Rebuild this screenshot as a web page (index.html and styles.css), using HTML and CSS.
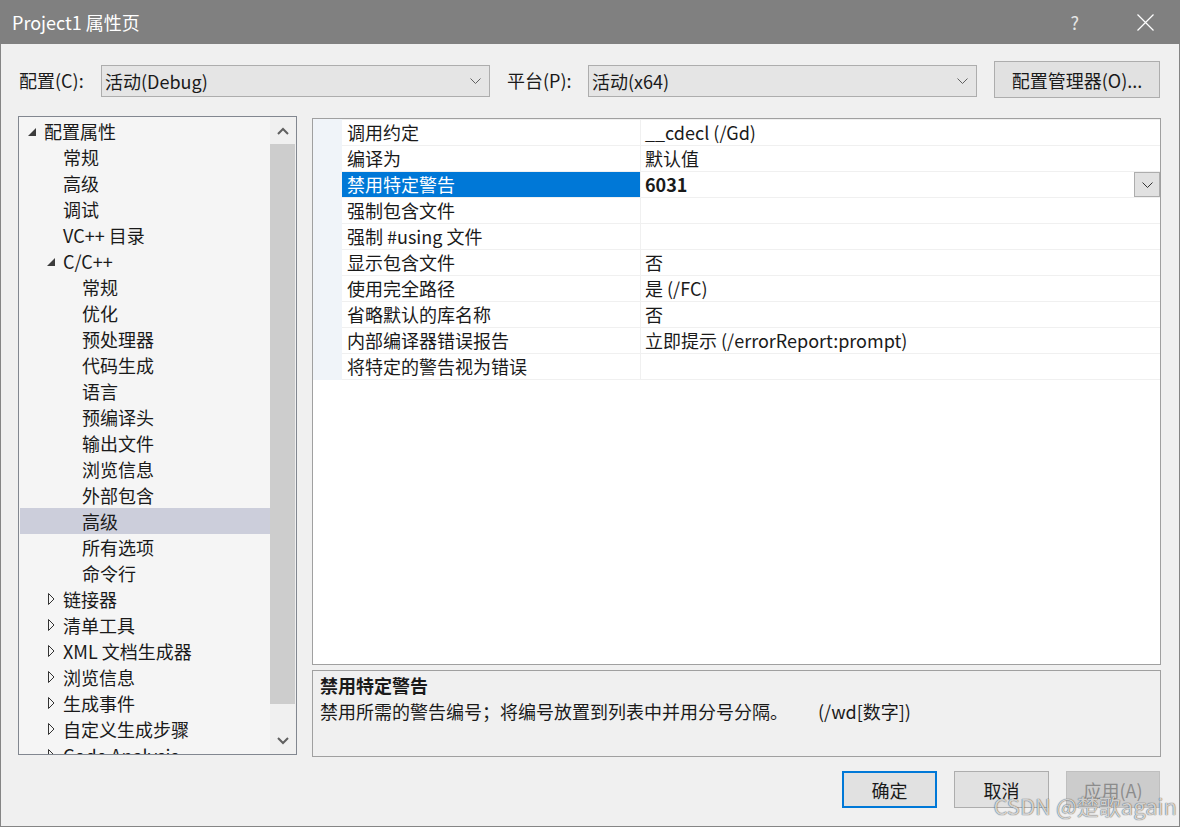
FILE: index.html
```html
<!DOCTYPE html>
<html lang="zh-CN">
<head>
  <meta charset="UTF-8" />
  <title>Project1 属性页</title>
  <link rel="stylesheet" href="styles.css">
</head>
<body>
<div class="window">

  <!-- Title bar -->
  <div class="titlebar">
    <span class="title">Project1 属性页</span>
    <span class="help">?</span>
    <svg class="close" width="17" height="17" viewBox="0 0 17 17">
      <path d="M0.5 0.5 L16.5 16.5 M16.5 0.5 L0.5 16.5" stroke="#ffffff" stroke-width="1.2" fill="none"/>
    </svg>
  </div>

  <div class="dialog">

    <!-- Configuration / platform -->
    <div class="config-row">
      <span class="field-label">配置(C):</span>
      <div class="combo">
        <span>活动(Debug)</span>
        <svg class="chev" width="11" height="6" viewBox="0 0 11 6"><path d="M0.5 0.5 L5.5 5.5 L10.5 0.5" stroke="#606060" fill="none"/></svg>
      </div>
      <span class="field-label platform">平台(P):</span>
      <div class="combo">
        <span>活动(x64)</span>
        <svg class="chev" width="11" height="6" viewBox="0 0 11 6"><path d="M0.5 0.5 L5.5 5.5 L10.5 0.5" stroke="#606060" fill="none"/></svg>
      </div>
      <button class="btn mgr-btn">配置管理器(O)...</button>
    </div>

    <div class="main">

      <!-- Tree -->
      <div class="tree">
        <ul class="tree-list" id="treeList"></ul>
        <div class="scrollbar">
          <div class="scroll-arrow">
            <svg width="12" height="8" viewBox="0 0 12 8"><path d="M1 7 L6 2 L11 7" stroke="#606060" stroke-width="2" fill="none"/></svg>
          </div>
          <div class="scroll-thumb"></div>
          <div class="scroll-gap"></div>
          <div class="scroll-arrow">
            <svg width="12" height="8" viewBox="0 0 12 8"><path d="M1 1 L6 6 L11 1" stroke="#606060" stroke-width="2" fill="none"/></svg>
          </div>
        </div>
      </div>

      <div class="right">
        <!-- Property grid -->
        <div class="grid">
          <div class="prop-row"><div class="gutter"></div><div class="name">调用约定</div><div class="value">__cdecl (/Gd)</div></div>
          <div class="prop-row"><div class="gutter"></div><div class="name">编译为</div><div class="value">默认值</div></div>
          <div class="prop-row selected">
            <div class="gutter"></div>
            <div class="name">禁用特定警告</div>
            <div class="value bold">6031
              <div class="drop-btn">
                <svg width="11" height="6" viewBox="0 0 11 6"><path d="M0.5 0.5 L5.5 5.5 L10.5 0.5" stroke="#333333" fill="none"/></svg>
              </div>
            </div>
          </div>
          <div class="prop-row"><div class="gutter"></div><div class="name">强制包含文件</div><div class="value"></div></div>
          <div class="prop-row"><div class="gutter"></div><div class="name">强制 #using 文件</div><div class="value"></div></div>
          <div class="prop-row"><div class="gutter"></div><div class="name">显示包含文件</div><div class="value">否</div></div>
          <div class="prop-row"><div class="gutter"></div><div class="name">使用完全路径</div><div class="value">是 (/FC)</div></div>
          <div class="prop-row"><div class="gutter"></div><div class="name">省略默认的库名称</div><div class="value">否</div></div>
          <div class="prop-row"><div class="gutter"></div><div class="name">内部编译器错误报告</div><div class="value">立即提示 (/errorReport:prompt)</div></div>
          <div class="prop-row last"><div class="gutter"></div><div class="name">将特定的警告视为错误</div><div class="value"></div></div>
        </div>

        <!-- Description -->
        <div class="desc">
          <div class="desc-title">禁用特定警告</div>
          <div class="desc-text">禁用所需的警告编号；将编号放置到列表中并用分号分隔。<span class="switch">(/wd[数字])</span></div>
        </div>
      </div>
    </div>

    <!-- Dialog buttons -->
    <div class="buttons">
      <button class="btn dlg-btn default">确定</button>
      <button class="btn dlg-btn">取消</button>
      <button class="btn dlg-btn disabled">应用(A)</button>
    </div>
  </div>

  <div class="watermark">CSDN @楚歌again</div>
</div>

<script>
  // Tree items: [level, text, twisty]  twisty: "open" | "closed" | ""
  const items = [
    [0, "配置属性", "open"],
    [1, "常规", ""],
    [1, "高级", ""],
    [1, "调试", ""],
    [1, "VC++ 目录", ""],
    [1, "C/C++", "open"],
    [2, "常规", ""],
    [2, "优化", ""],
    [2, "预处理器", ""],
    [2, "代码生成", ""],
    [2, "语言", ""],
    [2, "预编译头", ""],
    [2, "输出文件", ""],
    [2, "浏览信息", ""],
    [2, "外部包含", ""],
    [2, "高级", "", true],
    [2, "所有选项", ""],
    [2, "命令行", ""],
    [1, "链接器", "closed"],
    [1, "清单工具", "closed"],
    [1, "XML 文档生成器", "closed"],
    [1, "浏览信息", "closed"],
    [1, "生成事件", "closed"],
    [1, "自定义生成步骤", "closed"],
    [1, "Code Analysis", "closed"]
  ];

  const openIcon = '<svg width="8" height="8" viewBox="0 0 8 8"><path d="M8 0 L8 8 L0 8 Z" fill="#3c3c3c"/></svg>';
  const closedIcon = '<svg width="7" height="12" viewBox="0 0 7 12"><path d="M0.5 0.5 L6 6 L0.5 11.5 Z" fill="none" stroke="#333333"/></svg>';

  const list = document.getElementById("treeList");
  items.forEach(([level, text, twisty, selected]) => {
    const li = document.createElement("li");
    li.className = "tree-item lv" + level + (selected ? " selected" : "");
    let icon = "";
    if (twisty === "open") icon = openIcon;
    if (twisty === "closed") icon = closedIcon;
    li.innerHTML = `<span class="twisty ${twisty}">${icon}</span><span>${text}</span>`;
    list.appendChild(li);
  });
</script>
</body>
</html>
```

FILE: styles.css
```css
* {
  box-sizing: border-box;
}

html, body {
  margin: 0;
  padding: 0;
}

body {
  font-family: "Noto Sans CJK SC", "Noto Sans", sans-serif;
  font-size: 18px;
  color: #1a1a1a;
  background: #f0f0f0;
}

.window {
  position: relative;
  width: 1180px;
  height: 827px;
  display: flex;
  flex-direction: column;
  overflow: hidden;
}

/* Title bar */
.titlebar {
  height: 44px;
  background: #808080;
  display: flex;
  align-items: center;
  padding-left: 12px;
  color: #ffffff;
}

.title {
  flex: 1;
  font-size: 18px;
}

.help {
  font-size: 18px;
  color: #e6e6e6;
  margin-right: 58px;
}

.close {
  margin-right: 26px;
}

/* Dialog body */
.dialog {
  flex: 1;
  border: 1px solid #858585;
  border-top: none;
  padding: 0 18px 0 17px;
  display: flex;
  flex-direction: column;
}

.config-row {
  display: flex;
  align-items: flex-start;
  margin-top: 17px;
  height: 37px;
}

.field-label {
  width: 83px;
  margin-top: 3px;
  line-height: 32px;
  padding-left: 1px;
}

.field-label.platform {
  width: 82px;
  margin-left: 16px;
}

.combo {
  width: 389px;
  height: 32px;
  margin-top: 4px;
  background: #e5e5e5;
  border: 1px solid #adadad;
  display: flex;
  align-items: center;
  justify-content: space-between;
  padding: 0 8px 0 3px;
  line-height: 28px;
}

.btn {
  font-family: inherit;
  font-size: 18px;
  color: #1a1a1a;
  background: #e1e1e1;
  border: 1px solid #adadad;
  padding: 0;
}

.mgr-btn {
  width: 166px;
  height: 37px;
  margin-left: 17px;
}

/* Main area */
.main {
  display: flex;
  margin-top: 18px;
  height: 641px;
}

.tree {
  width: 279px;
  height: 639px;
  border: 1px solid #828790;
  background: #f5f5f5;
  display: flex;
  overflow: hidden;
}

.tree-list {
  list-style: none;
  margin: 0;
  padding: 1px 0 0 1px;
  width: 251px;
  overflow: hidden;
}

.tree-item {
  height: 26px;
  line-height: 26px;
  display: flex;
  align-items: center;
  white-space: nowrap;
  color: #1a1a1a;
}

.tree-item.lv0 { padding-left: 5px; }
.tree-item.lv1 { padding-left: 24px; }
.tree-item.lv2 { padding-left: 43px; }

.tree-item.selected {
  background: #cccedb;
}

.twisty {
  width: 19px;
  height: 26px;
  display: flex;
  align-items: center;
  padding-left: 3px;
}

.twisty.open svg {
  margin-top: 1px;
}

.twisty.closed {
  padding-left: 4px;
}

.scrollbar {
  width: 26px;
  background: #f0f0f0;
  display: flex;
  flex-direction: column;
}

.scroll-arrow {
  height: 27px;
  display: flex;
  align-items: center;
  justify-content: center;
  padding-right: 1px;
}

.scroll-thumb {
  height: 560px;
  background: #cdcdcd;
  margin-right: 1px;
}

.scroll-gap {
  flex: 1;
}

.right {
  width: 849px;
  margin-left: 15px;
  display: flex;
  flex-direction: column;
}

/* Property grid */
.grid {
  margin-top: 2px;
  height: 547px;
  border: 1px solid #a0a0a0;
  background: #ffffff;
}

.prop-row {
  display: flex;
  height: 26px;
}

.prop-row .gutter {
  width: 29px;
  background: #f0f4f9;
}

.prop-row .name,
.prop-row .value {
  border-top: 1px solid #f0f0f0;
  line-height: 25px;
  white-space: nowrap;
}

.prop-row.last .name,
.prop-row.last .value {
  border-bottom: 1px solid #f0f0f0;
  height: 27px;
}

.prop-row.last {
  height: 27px;
}

.prop-row .name {
  width: 299px;
  padding-left: 5px;
  border-right: 1px solid #f0f0f0;
}

.prop-row .value {
  flex: 1;
  padding-left: 4px;
  position: relative;
}

.prop-row.selected .name {
  background: #0078d7;
  color: #ffffff;
  border-top-color: #f0f0f0;
}

.value.bold {
  font-weight: bold;
}

.drop-btn {
  position: absolute;
  right: 0;
  top: 0;
  width: 26px;
  height: 25px;
  background: #e1e1e1;
  border: 1px solid #adadad;
  display: flex;
  align-items: center;
  justify-content: center;
}

/* Description */
.desc {
  margin-top: 5px;
  height: 87px;
  border: 1px solid #a0a0a0;
  background: #f0f0f0;
  padding: 1px 7px;
}

.desc-title {
  font-weight: bold;
  line-height: 26px;
}

.desc-text {
  line-height: 26px;
}

.switch {
  margin-left: 30px;
}

/* Dialog buttons */
.buttons {
  display: flex;
  justify-content: flex-end;
  margin-top: 14px;
  margin-right: 1px;
  gap: 17px;
}

.dlg-btn {
  width: 95px;
  height: 37px;
}

.dlg-btn.default {
  border: 2px solid #0078d7;
}

.dlg-btn.disabled {
  width: 94px;
  background: #cccccc;
  border-color: #bfbfbf;
  color: #8c8c8c;
}

.watermark {
  position: absolute;
  right: 3px;
  bottom: 6px;
  font-size: 22px;
  color: rgba(255, 255, 255, 0.75);
  text-shadow: 0 0 1px rgba(0, 0, 0, 0.6), 0 0 1px rgba(0, 0, 0, 0.4);
  pointer-events: none;
}
```
